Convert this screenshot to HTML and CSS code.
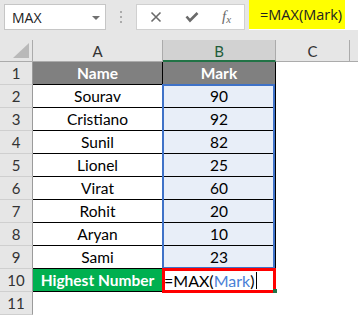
FILE: index.html
```html
<!DOCTYPE html>
<html>
<head>
<meta charset="utf-8">
<link rel="stylesheet" href="styles.css">
</head>
<body>
<div class="app">
  <div class="toolbar">
    <div class="namebox"><span class="nb-text">MAX</span><span class="caret"></span></div>
    <div class="dots"><i></i><i></i><i></i></div>
    <div class="btns">
      <svg class="ico" width="12" height="12" viewBox="0 0 12 12"><path d="M1.5 1.5 L10.5 10.5 M10.5 1.5 L1.5 10.5" stroke="#6a6a6a" stroke-width="1.6" fill="none"/></svg>
      <svg class="ico" width="14" height="12" viewBox="0 0 14 12"><path d="M1.5 5.5 L5 9.5 L12.5 2" stroke="#6a6a6a" stroke-width="2.6" fill="none"/></svg>
      <span class="fx">f<span class="fx-x">x</span></span>
    </div>
    <div class="formula"><span class="hl">=MAX(Mark)</span></div>
  </div>
  <div class="sheet">
    <div class="corner"><svg width="16" height="15" viewBox="0 0 16 15"><path d="M16 0 L16 15 L0 15 Z" fill="#b9b9b9"/></svg></div>
    <div class="colh">A</div>
    <div class="colh sel">B</div>
    <div class="colh">C</div>
    <div class="colh last"></div>

    <div class="rowh">1</div><div class="c hdr">Name</div><div class="c hdr">Mark</div><div class="e"></div><div class="e"></div>
    <div class="rowh">2</div><div class="c">Sourav</div><div class="c b">90</div><div class="e"></div><div class="e"></div>
    <div class="rowh">3</div><div class="c">Cristiano</div><div class="c b">92</div><div class="e"></div><div class="e"></div>
    <div class="rowh">4</div><div class="c">Sunil</div><div class="c b">82</div><div class="e"></div><div class="e"></div>
    <div class="rowh">5</div><div class="c">Lionel</div><div class="c b">25</div><div class="e"></div><div class="e"></div>
    <div class="rowh">6</div><div class="c">Virat</div><div class="c b">60</div><div class="e"></div><div class="e"></div>
    <div class="rowh">7</div><div class="c">Rohit</div><div class="c b">20</div><div class="e"></div><div class="e"></div>
    <div class="rowh">8</div><div class="c">Aryan</div><div class="c b">10</div><div class="e"></div><div class="e"></div>
    <div class="rowh">9</div><div class="c">Sami</div><div class="c b">23</div><div class="e"></div><div class="e"></div>
    <div class="rowh">10</div><div class="c green">Highest Number</div><div class="c edit">=MAX(<span class="ref">Mark</span>)<span class="cursor"></span></div><div class="e"></div><div class="e"></div>
    <div class="rowh">11</div><div class="e"></div><div class="e"></div><div class="e"></div><div class="e"></div>

    <div class="range"></div>
    <div class="active"><span class="handle"></span></div>
  </div>
</div>
</body>
</html>
```

FILE: styles.css
```css
* { box-sizing: border-box; }
html, body { margin: 0; padding: 0; }
body { width: 358px; height: 316px; overflow: hidden; background: #ffffff; }

.app { display: flex; flex-direction: column; width: 358px; }

.toolbar {
  height: 40px;
  background: #e6e6e6;
  display: flex;
  align-items: flex-start;
  padding: 4px 0 0 4px;
}

.namebox {
  width: 102px;
  height: 26px;
  background: #fff;
  border: 1px solid #c6c6c6;
  display: flex;
  align-items: center;
  justify-content: space-between;
  padding: 0 5px 0 7px;
  font-family: "Open Sans", "Noto Sans", sans-serif;
  font-size: 14px;
  color: #222;
}
.caret {
  width: 0; height: 0;
  border-left: 4px solid transparent;
  border-right: 4px solid transparent;
  border-top: 4px solid #707070;
  margin-top: 1px;
}

.dots {
  margin-left: 14px;
  width: 2px;
  height: 26px;
  display: flex;
  flex-direction: column;
  justify-content: center;
  gap: 3px;
}
.dots i { display: block; width: 2px; height: 2px; background: #ababab; }

.btns {
  margin-left: 14px;
  width: 109px;
  height: 26px;
  background: #fff;
  border: 1px solid #d0d0d0;
  display: flex;
  align-items: center;
  padding-left: 13px;
}
.ico { display: block; }
.ico + .ico { margin-left: 23px; }
.fx {
  margin-left: 23px;
  font-family: "Liberation Serif", "DejaVu Serif", serif;
  font-style: italic;
  font-size: 15px;
  color: #6a6a6a;
  line-height: 1;
  margin-top: -2px;
}
.fx-x { font-size: 11px; position: relative; top: 2px; }

.formula {
  margin-left: 4px;
  margin-top: -4px;
  flex: 1;
  height: 30px;
  background: #fff;
  display: flex;
}
.hl {
  width: 96px;
  height: 29px;
  background: #ffff00;
  padding-left: 11px;
  display: flex;
  align-items: center;
  font-family: "Open Sans", "Noto Sans", sans-serif;
  font-size: 14.5px;
  color: #222;
}

.sheet {
  position: relative;
  display: grid;
  grid-template-columns: 33px 130px 113px 74px 8px;
  grid-template-rows: 22px repeat(11, 23px);
  font-family: Lato, "Liberation Sans", sans-serif;
  font-size: 15.5px;
  color: #000;
}

.corner {
  background: #e6e6e6;
  border-right: 1px solid #ababab;
  border-bottom: 1px solid #ababab;
  display: flex;
  align-items: flex-end;
  justify-content: flex-end;
  padding: 0 3px 3px 0;
}
.corner svg { display: block; }

.colh {
  background: #e6e6e6;
  border-right: 1px solid #ababab;
  border-bottom: 1px solid #ababab;
  display: flex;
  align-items: center;
  justify-content: center;
  color: #333;
  font-size: 15px;
  padding-top: 1px;
}
.colh.sel {
  background: #d2d2d2;
  border-bottom: 2px solid #217346;
  color: #1f5c3a;
}
.colh.last { border-right: none; }

.rowh {
  background: #e6e6e6;
  border-right: 1px solid #9b9b9b;
  border-bottom: 1px solid #cfcfcf;
  display: flex;
  align-items: center;
  justify-content: center;
  color: #333;
  font-size: 15px;
}

.c {
  border-right: 1px solid #000;
  border-bottom: 1px solid #000;
  display: flex;
  align-items: center;
  justify-content: center;
  white-space: nowrap;
  background: #fff;
}
.c.hdr { background: #808080; color: #fff; font-weight: 700; }
.c.b { background: #e8eef8; }
.c.green { background: #00b050; color: #fff; font-weight: 700; }
.c.edit {
  justify-content: flex-start;
  padding-left: 1px;
  color: #000;
  font-size: 16px;
}
.ref { color: #4a7fd6; }
.cursor { display: inline-block; width: 1px; height: 17px; background: #000; margin-left: 2px; }

.e { background: #fff; }

.range {
  position: absolute;
  left: 162px;
  top: 44px;
  width: 113px;
  height: 185px;
  border: 2px solid #3f72c8;
  pointer-events: none;
}
.active {
  position: absolute;
  left: 162px;
  top: 228px;
  width: 114px;
  height: 25px;
  border: 3px solid #ff0000;
  pointer-events: none;
}
.handle {
  position: absolute;
  right: -4px;
  bottom: -3px;
  width: 4px;
  height: 4px;
  background: #217346;
}
```
